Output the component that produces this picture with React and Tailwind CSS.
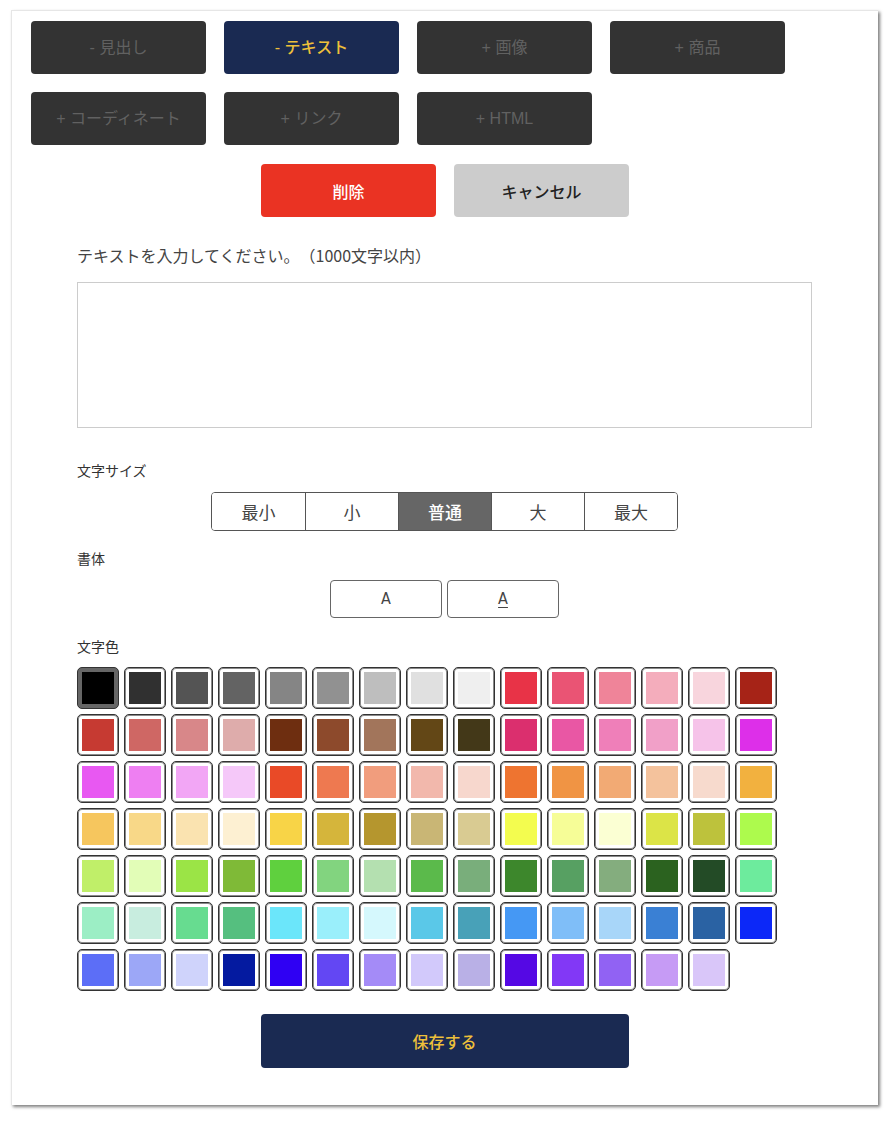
import React, { useState } from "react";

const blocks = [
  { label: "- 見出し", active: false },
  { label: "- テキスト", active: true },
  { label: "+ 画像", active: false },
  { label: "+ 商品", active: false },
  { label: "+ コーディネート", active: false },
  { label: "+ リンク", active: false },
  { label: "+ HTML", active: false },
];

const sizes = ["最小", "小", "普通", "大", "最大"];

const colors = [
  "#000000", "#303030", "#545454", "#636363", "#858585", "#919191", "#bebebe", "#e0e0e0", "#efefef", "#e83347", "#ea5474", "#ef8499", "#f4adbc", "#f8d5dd", "#a62317",
  "#c63a32", "#cf6764", "#d88789", "#deacab", "#6e2e10", "#8d4a2c", "#a2755b", "#634716", "#433818", "#db2f6e", "#e957a4", "#ef7fb9", "#f1a0c8", "#f6c3e9", "#dd2fe9",
  "#e858f2", "#ee7ff2", "#f2a6f5", "#f5c8f9", "#e94a27", "#ee7950", "#f19d7d", "#f2b8ac", "#f7d7cd", "#ee7430", "#f09444", "#f2aa74", "#f4c29c", "#f7dacd", "#f2b13f",
  "#f6c65e", "#f8d888", "#fae3b0", "#fdf0d2", "#f8d447", "#d5b53b", "#b5962e", "#c9b675", "#d9cb92", "#f3fc4f", "#f6fd97", "#fbffd3", "#dce447", "#bdc23c", "#adfa4d",
  "#c0ef69", "#e2fdb7", "#9be446", "#7fba37", "#5fd03e", "#82d47f", "#b4e0b0", "#5bba4b", "#79ae7b", "#3d872c", "#57a062", "#84ad7e", "#2b621f", "#234b26", "#6deb9d",
  "#9ceec5", "#c8eddf", "#67dc90", "#55bf7f", "#6be6fa", "#9aeffb", "#d5f8fd", "#5ac8e8", "#48a1b8", "#4598f4", "#7fbef8", "#a8d6f9", "#3a80d4", "#2a62a3", "#0c28f8",
  "#5c6ef7", "#9ca7f7", "#cfd3fb", "#041aa0", "#2f00f3", "#6347f3", "#a48bf7", "#d2c9fb", "#b9b0e6", "#5508e4", "#8238f6", "#9162f3", "#c69bf5", "#d9c6f9",
];

export default function App() {
  const [size, setSize] = useState("普通");
  const [color, setColor] = useState("#000000");
  const [text, setText] = useState("");

  return (
    <div className="min-h-screen bg-white pt-[10px] pl-[11px] font-['Noto_Sans_CJK_JP','Noto_Sans',sans-serif] [text-spacing-trim:space-all]">
      <div className="w-[867px] h-[1095px] bg-white border-l border-t border-[#e6e6e6] shadow-[2px_2px_3px_rgba(0,0,0,0.5)] flex flex-col">
        {/* block type buttons */}
        <div className="pt-[10px] pl-[19px]">
          <div className="w-[754px] flex flex-wrap gap-x-[18px] gap-y-[18px]">
            {blocks.map((b) => (
              <button
                key={b.label}
                className={
                  b.active
                    ? "w-[175px] h-[53px] rounded-[4px] bg-[#1a2a52] text-[#eec03a] text-[16px] font-medium font-['Liberation_Sans','Noto_Sans_CJK_JP',sans-serif] whitespace-pre"
                    : "w-[175px] h-[53px] rounded-[4px] bg-[#333333] text-[#616161] text-[16px] font-['Liberation_Sans','Noto_Sans_CJK_JP',sans-serif] whitespace-pre"
                }
              >
                {b.label}
              </button>
            ))}
          </div>
        </div>

        <div className="mt-[19px] flex justify-center gap-[18px]">
          <button className="w-[175px] h-[53px] rounded-[4px] bg-[#ea3323] text-white text-[16px] font-medium">
            削除
          </button>
          <button className="w-[175px] h-[53px] rounded-[4px] bg-[#cccccc] text-[#222] text-[16px] font-medium">
            キャンセル
          </button>
        </div>

        {/* editor */}
        <div className="pl-[65px] pr-[66px] flex flex-col">
          <label className="mt-[26px] text-[16px] leading-[24px] text-[#444]">
            テキストを入力してください。（1000文字以内）
          </label>
          <textarea
            value={text}
            onChange={(e) => setText(e.target.value)}
            className="mt-[15px] w-full h-[146px] border border-[#cccccc] resize-none outline-none p-2 text-[15px]"
          />

          <div className="mt-[32px] text-[14px] leading-[20px] text-[#333]">文字サイズ</div>
          <div className="mt-[12px] flex justify-center">
            <div className="flex border border-[#555] rounded-[4px] overflow-hidden">
              {sizes.map((s, i) => (
                <button
                  key={s}
                  onClick={() => setSize(s)}
                  className={
                    (i > 0 ? "border-l border-[#555] " : "") +
                    (size === s
                      ? "w-[93px] h-[37px] bg-[#666666] text-white text-[17px] font-medium"
                      : "w-[93px] h-[37px] bg-white text-[#444] text-[17px]")
                  }
                >
                  {s}
                </button>
              ))}
            </div>
          </div>

          <div className="mt-[17px] text-[14px] leading-[20px] text-[#333]">書体</div>
          <div className="mt-[12px] flex justify-center gap-[5px]">
            <button className="w-[112px] h-[38px] border border-[#666] rounded-[4px] bg-white text-[#444] text-[16px] font-['DejaVu_Sans_Condensed',sans-serif]">
              A
            </button>
            <button className="w-[112px] h-[38px] border border-[#666] rounded-[4px] bg-white text-[#444] text-[16px] font-['DejaVu_Sans_Condensed',sans-serif] underline underline-offset-[3px]">
              A
            </button>
          </div>

          <div className="mt-[18px] text-[14px] leading-[20px] text-[#333]">文字色</div>
          <div className="mt-[11px] grid grid-cols-[repeat(15,42px)] gap-[5px]">
            {colors.map((c) => (
              <button
                key={c}
                onClick={() => setColor(c)}
                className={
                  color === c
                    ? "w-[42px] h-[42px] rounded-[5px] border border-[#333] bg-[#666] p-[4px]"
                    : "w-[42px] h-[42px] rounded-[5px] border border-[#333] bg-white shadow-[inset_0_0_0_1px_#8a8a8a] p-[4px]"
                }
              >
                <span className="block w-full h-full" style={{ backgroundColor: c }} />
              </button>
            ))}
          </div>

          <div className="mt-[23px] flex justify-center">
            <button className="w-[368px] h-[54px] rounded-[4px] bg-[#1a2a52] text-[#eec03a] text-[16px] font-medium">
              保存する
            </button>
          </div>
        </div>
      </div>
    </div>
  );
}
